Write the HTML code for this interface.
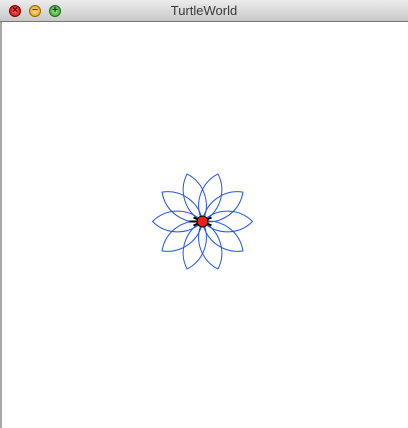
<!DOCTYPE html><html><head><style>
body{margin:0;width:408px;height:428px;overflow:hidden;background:#fff;font-family:"Liberation Sans",sans-serif}
.tb{position:absolute;left:0;top:0;width:408px;height:21px;background:linear-gradient(#ececec,#c8c8c8);border-bottom:1px solid #777}
.t{position:absolute;top:3px;left:0;width:408px;text-align:center;font-size:13px;color:#3a3a3a}
.b{position:absolute;top:5px;width:12px;height:12px;border-radius:50%;box-sizing:border-box;font-size:10px;line-height:10px;text-align:center;font-weight:bold}
.lb{position:absolute;left:0;top:22px;width:2px;height:406px;background:#a8a8a8}
</style></head><body>
<div class="tb"><div class="t">TurtleWorld</div>
<div class="b" style="left:9px;background:radial-gradient(#f66,#b00);border:1px solid #800;color:#600">×</div>
<div class="b" style="left:29px;background:radial-gradient(#fd9,#d90);border:1px solid #960;color:#630">−</div>
<div class="b" style="left:49px;background:radial-gradient(#9e7,#393);border:1px solid #262;color:#030">+</div>
</div>
<div class="lb"></div>
<svg width="408" height="428" style="position:absolute;left:0;top:0">
<g transform="translate(202.5,221.5)" fill="none" stroke="#2255ee" stroke-width="1">
<g id="p"><path d="M0,0 A35.4,35.4 0 0 1 50,0 A35.4,35.4 0 0 1 0,0"/></g>
<use href="#p" transform="rotate(36)"/><use href="#p" transform="rotate(72)"/><use href="#p" transform="rotate(108)"/><use href="#p" transform="rotate(144)"/><use href="#p" transform="rotate(180)"/><use href="#p" transform="rotate(216)"/><use href="#p" transform="rotate(252)"/><use href="#p" transform="rotate(288)"/><use href="#p" transform="rotate(324)"/>
<path d="M-13,0 L0,0 M-9,-4 L0,0 M-9,4 L0,0 M9,-4 L0,0 M9,4 L0,0" stroke="#000" stroke-width="2"/>
<circle r="5.5" fill="#e8201a" stroke="#000" stroke-width="1"/>
</g></svg>
</body></html>
